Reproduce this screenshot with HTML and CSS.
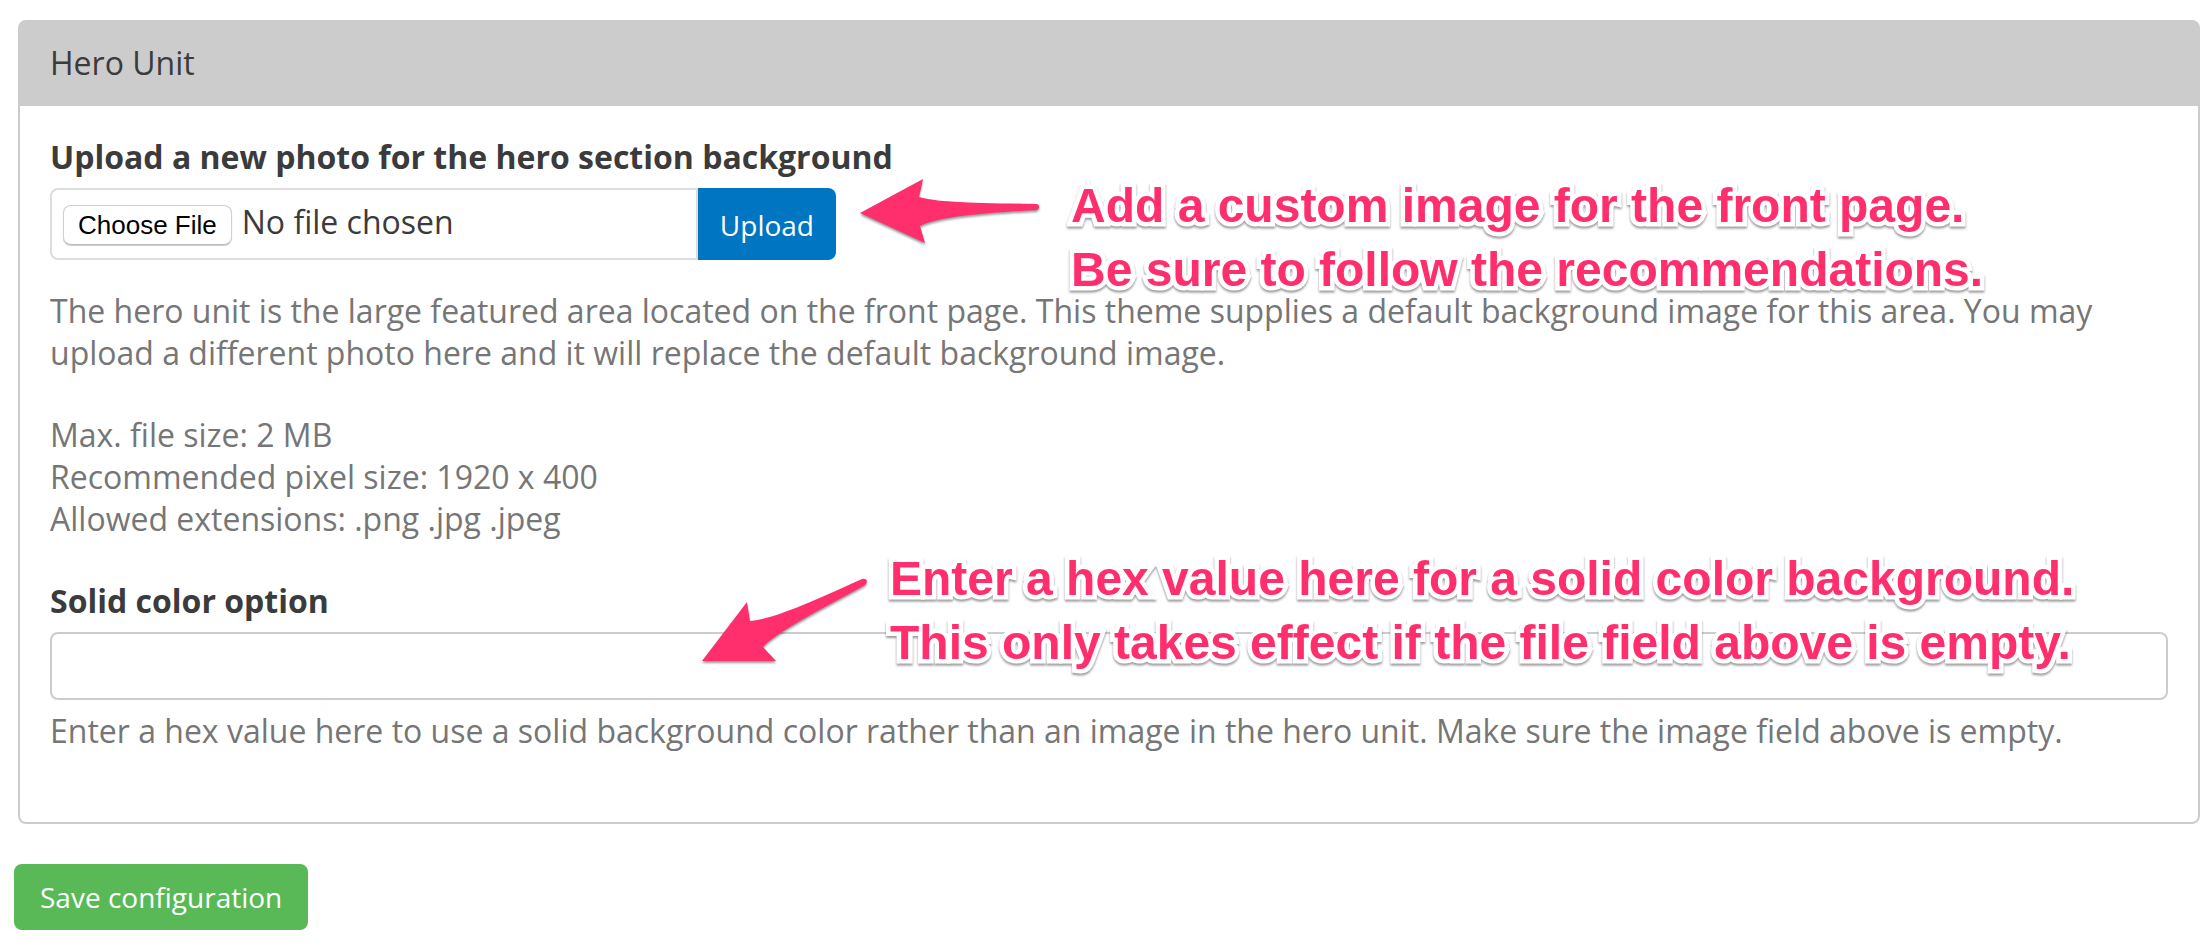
FILE: index.html
```html
<!DOCTYPE html>
<html lang="en">
<head>
<meta charset="utf-8">
<title>Hero Unit</title>
<meta name="viewport" content="width=device-width, initial-scale=1">
<link rel="stylesheet" href="styles.css">
</head>
<body>
<form class="page">
  <section class="panel">
    <h2 class="panel-heading">Hero Unit</h2>
    <div class="panel-body">
      <div class="field">
        <label class="field-label" for="hero-photo">Upload a new photo for the hero section background</label>
        <div class="upload-row">
          <input class="file-input" type="file" id="hero-photo">
          <button class="upload-button" type="button">Upload</button>
        </div>
        <p class="help help-upload">The hero unit is the large featured area located on the front page. This theme supplies a default background image for this area. You may upload a different photo here and it will replace the default background image.</p>
        <p class="help help-limits">Max. file size: 2 MB<br>Recommended pixel size: 1920 x 400<br>Allowed extensions: .png .jpg .jpeg</p>
        <svg class="arrow arrow-upload" viewBox="0 0 184 72" aria-hidden="true">
          <path d="M2 37 L65 3 L61 21 C78 26 110 27 179 28 Q182 29 181 32 L179 34 C123 37 80 41 62 50 L67 67 Z"/>
        </svg>
        <p class="note note-upload">Add a custom image for the front page.<br>Be sure to follow the recommendations.</p>
      </div>
      <div class="field">
        <label class="field-label" for="hero-color">Solid color option</label>
        <input class="text-input" type="text" id="hero-color">
        <p class="help help-color">Enter a hex value here to use a solid background color rather than an image in the hero unit. Make sure the image field above is empty.</p>
        <svg class="arrow arrow-color" viewBox="0 0 172 92" aria-hidden="true">
          <path d="M2 85 L47 26 L50 45 C75 43 115 24 162 3 Q166 2 167 5 Q167 7 165 9 C125 31 75 57 63 71 L76 85 Z"/>
        </svg>
        <p class="note note-color">Enter a hex value here for a solid color background.<br>This only takes effect if the file field above is empty.</p>
      </div>
    </div>
  </section>
  <button class="save-button" type="submit">Save configuration</button>
</form>
</body>
</html>
```
FILE: styles.css
```css
* {
  box-sizing: border-box;
}

body {
  margin: 0;
  background: #fff;
  color: #3b3b3b;
  font-family: "Open Sans", sans-serif;
  font-size: 32px;
  line-height: 42px;
}

.page {
  padding: 20px 10px 18px 14px;
}

.panel {
  margin: 0 0 40px 4px;
  border: 2px solid #ccc;
  border-radius: 8px;
}

.panel-heading {
  margin: 0;
  padding: 20px 30px 22px;
  background: #ccc;
  font-size: 32px;
  font-weight: 400;
}

.panel-body {
  padding: 30px;
}

.field {
  position: relative;
  margin-bottom: 40px;
}

.field-label {
  display: block;
  margin-bottom: 10px;
  font-weight: 700;
}

.upload-row {
  display: flex;
  width: 786px;
  max-width: 100%;
}

.file-input {
  flex: 1;
  min-width: 0;
  height: 72px;
  padding: 11px 11px 13px;
  border: 2px solid #ddd;
  border-radius: 8px 0 0 8px;
  color: #3b3b3b;
  font: 32px/42px "Open Sans", sans-serif;
}

.file-input::file-selector-button {
  height: 40px;
  margin: 0 10px 0 0;
  padding: 0 14px;
  border: 1px solid #d0d0d0;
  border-bottom-color: #bbb;
  border-radius: 8px;
  background: #fff;
  box-shadow: 0 1px 1px #ccc;
  color: #000;
  font: 26px/38px "Liberation Sans", Arial, sans-serif;
}

.upload-button,
.save-button {
  border: 0;
  color: #fff;
  font: 28px/40px "Open Sans", sans-serif;
}

.upload-button {
  padding: 2px 22px 0;
  border-radius: 0 8px 8px 0;
  background: #0075c2;
}

.save-button {
  height: 66px;
  padding: 0 26px;
  border-radius: 8px;
  background: #59b957;
}

.help {
  margin: 0;
  color: #767676;
}

.help-upload {
  margin-top: 30px;
}

.help-limits {
  margin-top: 40px;
}

.help-color {
  margin-top: 10px;
}

.text-input {
  display: block;
  width: 100%;
  height: 68px;
  padding: 12px 24px;
  border: 2px solid #ccc;
  border-radius: 8px;
  color: #3b3b3b;
  font: 32px/42px "Open Sans", sans-serif;
}

/* Callouts drawn over the form */
.arrow {
  position: absolute;
  fill: #ff2f6d;
  filter: drop-shadow(0 2px 1px rgba(0, 0, 0, 0.4));
  pointer-events: none;
}

.arrow-upload {
  top: 40px;
  left: 808px;
  width: 184px;
}

.arrow-color {
  top: -4px;
  left: 650px;
  width: 172px;
}

.note {
  position: absolute;
  margin: 0;
  color: #ff2f6d;
  font: 700 48px/64px "Liberation Sans", Arial, sans-serif;
  white-space: nowrap;
  paint-order: stroke fill;
  -webkit-text-stroke: 9px #fff;
  stroke-linejoin: round;
  filter: drop-shadow(0 2px 1px rgba(0, 0, 0, 0.4));
  pointer-events: none;
}

.note-upload {
  top: 38px;
  left: 1021px;
}

.note-color {
  top: -33px;
  left: 840px;
}
```
